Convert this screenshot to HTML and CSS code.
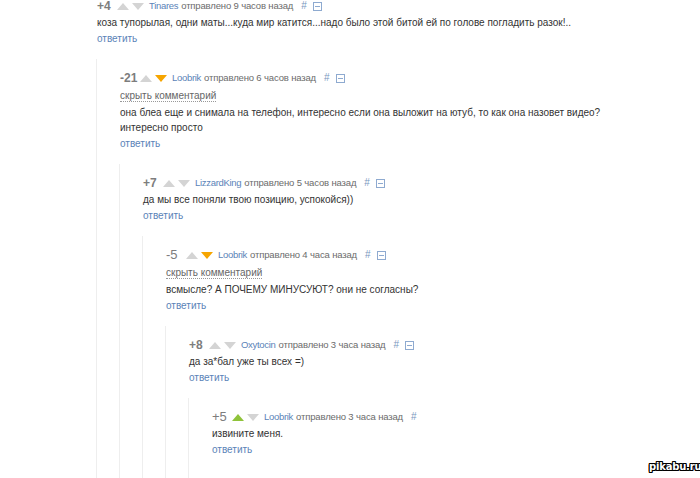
FILE: index.html
```html
<!DOCTYPE html>
<html lang="ru">
<head>
<meta charset="utf-8">
<link rel="stylesheet" href="styles.css">
</head>
<body>
<div class="page">
  <div class="comment">
    <div class="head">
      <span class="score">+4</span>
      <span class="vote up"></span><span class="vote down"></span>
      <span class="user">Tinares</span> <span class="meta">отправлено 9 часов назад</span>
      <span class="hash">#</span><span class="box"></span>
    </div>
    <div class="text">коза тупорылая, одни маты...куда мир катится...надо было этой битой ей по голове погладить разок!..</div>
    <div class="reply">ответить</div>
    <div class="children">
      <div class="comment">
        <div class="head">
          <span class="score">-21</span>
          <span class="vote up"></span><span class="vote down on"></span>
          <span class="user">Loobrik</span> <span class="meta">отправлено 6 часов назад</span>
          <span class="hash">#</span><span class="box"></span>
        </div>
        <div class="hide"><span>скрыть комментарий</span></div>
        <div class="text">она блеа еще и снимала на телефон, интересно если она выложит на ютуб, то как она назовет видео?<br>интересно просто</div>
        <div class="reply">ответить</div>
        <div class="children">
          <div class="comment">
            <div class="head">
              <span class="score">+7</span>
              <span class="vote up"></span><span class="vote down"></span>
              <span class="user">LizzardKing</span> <span class="meta">отправлено 5 часов назад</span>
              <span class="hash">#</span><span class="box"></span>
            </div>
            <div class="text">да мы все поняли твою позицию, успокойся))</div>
            <div class="reply">ответить</div>
            <div class="children">
              <div class="comment">
                <div class="head">
                  <span class="score light">-5</span>
                  <span class="vote up"></span><span class="vote down on"></span>
                  <span class="user">Loobrik</span> <span class="meta">отправлено 4 часа назад</span>
                  <span class="hash">#</span><span class="box"></span>
                </div>
                <div class="hide"><span>скрыть комментарий</span></div>
                <div class="text">всмысле? А ПОЧЕМУ МИНУСУЮТ? они не согласны?</div>
                <div class="reply">ответить</div>
                <div class="children">
                  <div class="comment">
                    <div class="head">
                      <span class="score">+8</span>
                      <span class="vote up"></span><span class="vote down"></span>
                      <span class="user">Oxytocin</span> <span class="meta">отправлено 3 часа назад</span>
                      <span class="hash">#</span><span class="box"></span>
                    </div>
                    <div class="text">да за*бал уже ты всех =)</div>
                    <div class="reply">ответить</div>
                    <div class="children last">
                      <div class="comment">
                        <div class="head">
                          <span class="score light">+5</span>
                          <span class="vote up on"></span><span class="vote down"></span>
                          <span class="user">Loobrik</span> <span class="meta">отправлено 3 часа назад</span>
                          <span class="hash">#</span>
                        </div>
                        <div class="text">извините меня.</div>
                        <div class="reply">ответить</div>
                      </div>
                    </div>
                  </div>
                </div>
              </div>
            </div>
          </div>
        </div>
      </div>
    </div>
  </div>
</div>
<div class="watermark">pikabu.ru</div>
</body>
</html>
```
FILE: styles.css
```css
html, body {
  margin: 0;
  padding: 0;
  background: #fff;
}
body {
  font-family: "Liberation Sans", Arial, sans-serif;
  font-size: 10px;
  color: #333;
  position: relative;
  height: 478px;
  overflow: hidden;
}
.page {
  padding-left: 97px;
  height: 480px;
  overflow: hidden;
  margin-top: -2px;
}
.head {
  height: 16px;
  line-height: 16px;
  display: flex;
  align-items: center;
  white-space: nowrap;
}
.score {
  font-weight: bold;
  color: #7d7d7d;
  font-size: 12px;
  min-width: 19px;
  margin-right: 1px;
}
.score.light {
  font-weight: normal;
  font-size: 13px;
}
.vote {
  width: 0;
  height: 0;
  border-left: 6px solid transparent;
  border-right: 6px solid transparent;
  margin-right: 3px;
}
.vote.up { border-bottom: 7px solid #d4d4d4; }
.vote.down { border-top: 7px solid #d4d4d4; margin-right: 5px; }
.vote.up.on { border-bottom-color: #8fc33a; }
.vote.down.on { border-top-color: #f6a500; }
.user {
  color: #5b83b8;
  font-size: 9.5px;
  letter-spacing: -0.3px;
  margin-right: 3px;
}
.meta {
  color: #6b6b6b;
  font-size: 9.5px;
  letter-spacing: -0.15px;
}
.hash {
  color: #7a98c0;
  font-size: 10px;
  margin-left: 8px;
  margin-right: 6px;
}
.box {
  width: 7px;
  height: 7px;
  border: 1px solid #8eaad0;
  position: relative;
}
.box::after {
  content: "";
  position: absolute;
  left: 1px;
  right: 1px;
  top: 3px;
  height: 1px;
  background: #8eaad0;
}
.hide {
  line-height: 16px;
  margin-top: 2px;
  color: #666;
}
.hide span {
  border-bottom: 1px dotted #999;
}
.text {
  line-height: 15px;
  margin-top: 1px;
  color: #333;
}
.reply {
  line-height: 16px;
  margin-top: 1px;
  color: #5b83b8;
}
.children {
  margin-left: -1px;
  margin-top: 12px;
  padding-top: 11px;
  padding-left: 23px;
  padding-bottom: 40px;
  border-left: 1px solid #eeeeee;
}
.watermark {
  position: absolute;
  left: 649px;
  top: 461px;
  font-family: "DejaVu Sans", sans-serif;
  font-weight: bold;
  font-size: 10px;
  color: #fff;
  letter-spacing: -0.2px;
  text-shadow: 1px 0 0 #000, -1px 0 0 #000, 0 1px 0 #000, 0 -1px 0 #000, 1px 1px 0 #000, -1px -1px 0 #000, 1px -1px 0 #000, -1px 1px 0 #000;
}
```
